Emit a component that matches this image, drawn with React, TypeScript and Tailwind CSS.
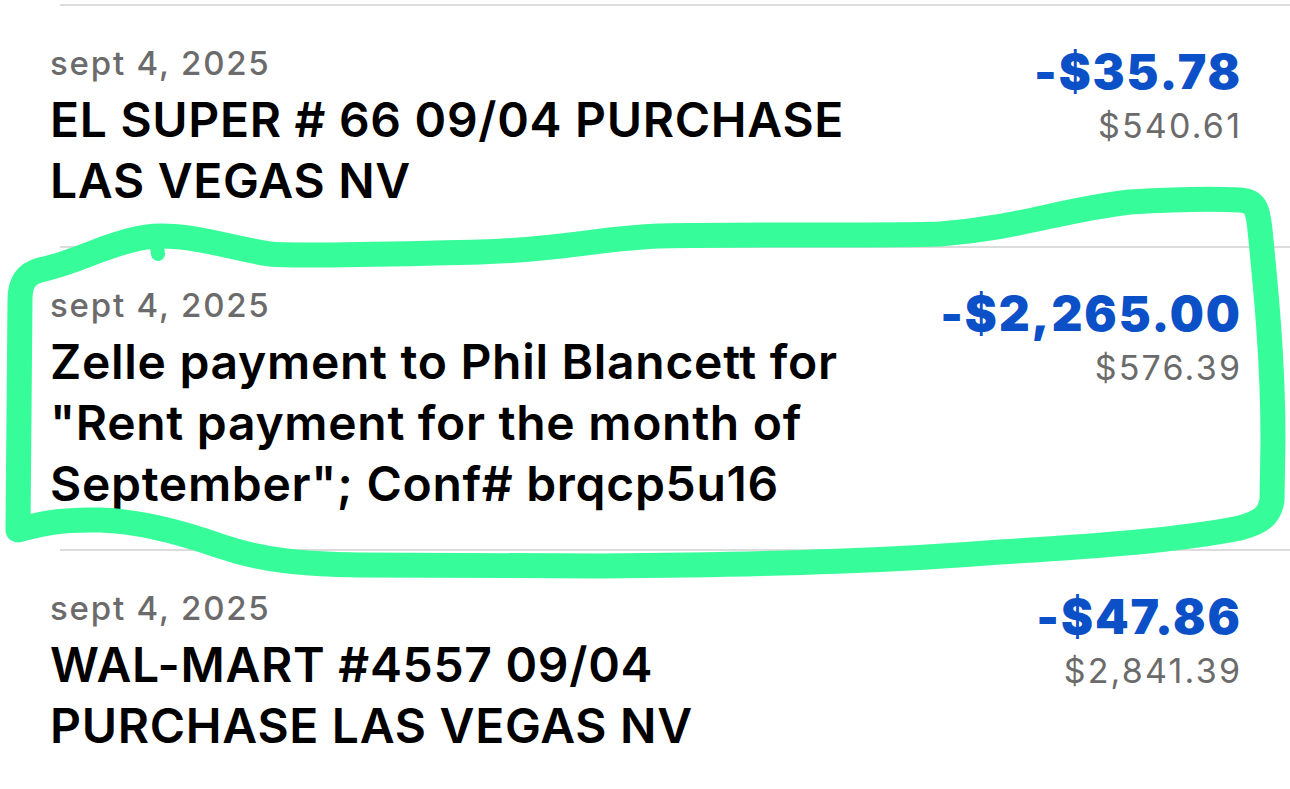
import React from "react";

type Tx = {
  date: string;
  lines: string[];
  amount: string;
  balance: string;
};

const txs: Tx[] = [
  {
    date: "sept 4, 2025",
    lines: ["EL SUPER # 66 09/04 PURCHASE", "LAS VEGAS NV"],
    amount: "-$35.78",
    balance: "$540.61",
  },
  {
    date: "sept 4, 2025",
    lines: [
      "Zelle payment to Phil Blancett for",
      "\"Rent payment for the month of",
      "September\"; Conf# brqcp5u16",
    ],
    amount: "-$2,265.00",
    balance: "$576.39",
  },
  {
    date: "sept 4, 2025",
    lines: ["WAL-MART #4557 09/04", "PURCHASE LAS VEGAS NV"],
    amount: "-$47.86",
    balance: "$2,841.39",
  },
];

function Row({ tx }: { tx: Tx }) {
  return (
    <div>
      <div className="ml-[60px] h-[2px] bg-[#dcdcdc]" />
      <div className="flex items-start justify-between pl-[50px] pr-[50px] pt-[37px] pb-[35px]">
        <div className="flex flex-col">
          <div className="text-[33px] leading-[40px] font-medium text-[#6b6b6b] tracking-[1.8px]">
            {tx.date}
          </div>
          <div className="mt-[6px] text-[48px] leading-[61px] font-semibold text-black tracking-[0.7px]">
            {tx.lines.map((l, i) => (
              <span key={i} className="block whitespace-nowrap">
                {l}
              </span>
            ))}
          </div>
        </div>
        <div className="mt-[3px] flex flex-col items-end">
          <div className="text-[48px] leading-[52px] font-black text-[#0b50c6] tracking-[1.9px] mr-[-1.9px]">
            {tx.amount}
          </div>
          <div className="mt-[8px] text-[34px] leading-[40px] font-normal text-[#6b6b6b] tracking-[2.2px] mr-[-2.2px]">
            {tx.balance}
          </div>
        </div>
      </div>
    </div>
  );
}

export default function App() {
  return (
    <div className="relative w-[1290px] h-[789px] overflow-hidden bg-white font-['Inter','Liberation_Sans',sans-serif]">
      <div className="pt-[4px]">
        {txs.map((tx, i) => (
          <Row key={i} tx={tx} />
        ))}
      </div>
      <svg
        className="pointer-events-none absolute left-0 top-0"
        width="1290"
        height="789"
        viewBox="0 0 1290 789"
        fill="none"
      >
        <path
          d="M 18 528 L 20 300 C 20 282, 26 274, 40 270 C 60 266, 80 258, 100 250 C 120 243, 140 236, 160 236 C 200 236, 230 248, 270 254 C 300 257, 420 253, 480 252 C 560 250, 600 238, 660 236 C 760 234, 880 236, 940 234 C 1020 228, 1060 210, 1130 202 C 1180 199, 1220 199, 1240 200 C 1256 201, 1258 210, 1260 230 C 1266 290, 1273 360, 1273 440 L 1272 500 C 1270 515, 1262 522, 1240 528 C 1180 540, 1100 546, 1000 552 C 900 560, 800 564, 600 566 L 360 565 C 300 564, 260 560, 220 546 C 180 532, 140 521, 100 520 C 60 519, 40 524, 18 530"
          stroke="#36fd9a"
          strokeWidth="25"
          strokeLinecap="round"
          strokeLinejoin="round"
        />
        <path d="M 156 240 L 158 254" stroke="#36fd9a" strokeWidth="14" strokeLinecap="round" />
      </svg>
    </div>
  );
}
